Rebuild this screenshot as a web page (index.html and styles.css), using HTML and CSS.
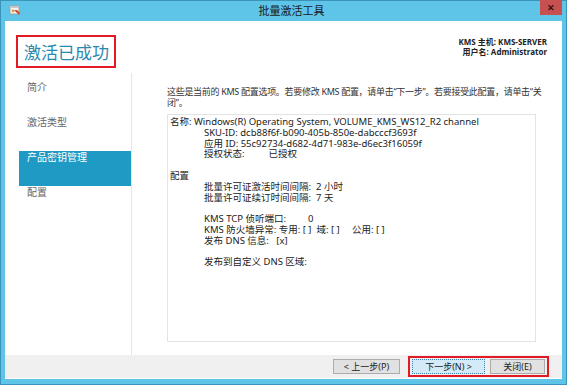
FILE: index.html
```html
<!DOCTYPE html>
<html lang="zh-CN">
<head>
    <meta charset="UTF-8">
    <title>批量激活工具</title>
    <link rel="stylesheet" href="styles.css">
</head>
<body>

<div class="window">
    <div class="titlebar">
        <svg class="app-icon" width="12" height="12" viewBox="0 0 12 12">
            <rect x="1" y="2" width="9" height="8" fill="#f4f4f4" stroke="#9a9a9a" stroke-width="0.8"/>
            <rect x="1" y="2" width="9" height="2" fill="#c8c8c8"/>
            <path d="M5 6 L10 11 L11 9 L8 6 Z" fill="#d04a2a"/>
            <circle cx="4" cy="7" r="1.4" fill="#e0a040"/>
        </svg>
        <div class="title">批量激活工具</div>
        <div class="close">✕</div>
    </div>

    <div class="client">
        <div class="header">
            <h1 class="heading">激活已成功</h1>
            <div class="host-info">
                <div>KMS 主机: KMS-SERVER</div>
                <div>用户名: Administrator</div>
            </div>
        </div>

        <div class="main">
            <ul class="nav">
                <li>简介</li>
                <li>激活类型</li>
                <li class="active">产品密钥管理</li>
                <li>配置</li>
            </ul>

            <div class="content">
                <p class="intro">这些是当前的 KMS 配置选项。若要修改 KMS 配置，请单击“下一步”。若要接受此配置，请单击“关闭”。</p>
                <div class="details">
                    <div>名称: Windows(R) Operating System, VOLUME_KMS_WS12_R2 channel</div>
                    <div class="ind">SKU-ID: dcb88f6f-b090-405b-850e-dabcccf3693f</div>
                    <div class="ind">应用 ID: 55c92734-d682-4d71-983e-d6ec3f16059f</div>
                    <div class="ind">授权状态:<span class="tab1">已授权</span></div>
                    <div class="blank"></div>
                    <div>配置</div>
                    <div class="ind">批量许可证激活时间间隔:&nbsp; 2 小时</div>
                    <div class="ind">批量许可证续订时间间隔:&nbsp; 7 天</div>
                    <div class="blank"></div>
                    <div class="ind">KMS TCP 侦听端口:<span class="tab2">0</span></div>
                    <div class="ind">KMS 防火墙异常: 专用: [ ]&nbsp; 域: [ ]&nbsp;&nbsp;&nbsp;&nbsp; 公用: [ ]</div>
                    <div class="ind">发布 DNS 信息:&nbsp;&nbsp; [x]</div>
                    <div class="blank"></div>
                    <div class="ind">发布到自定义 DNS 区域:</div>
                </div>
            </div>
        </div>

        <div class="footer">
            <button class="btn">&lt; 上一步(P)</button>
            <div class="marked">
                <button class="btn default">下一步(N) &gt;</button>
                <button class="btn">关闭(E)</button>
            </div>
        </div>
    </div>
</div>

</body>
</html>
```

FILE: styles.css
```css
body {
    margin: 0;
    font-family: "Noto Sans", "Noto Sans CJK SC", sans-serif;
    background: #fff;
}
.window {
    width: 567px;
    height: 385px;
    box-sizing: border-box;
    background: #5ec4e8;
    border: 1px solid #3a94b8;
    padding: 0 4px 5px 4px;
    display: flex;
    flex-direction: column;
}
.titlebar {
    height: 20px;
    display: flex;
    align-items: center;
    position: relative;
}
.app-icon {
    margin-left: 4px;
    margin-top: -2px;
}
.title {
    flex: 1;
    text-align: center;
    font-size: 11px;
    color: #1a1a1a;
    font-family: "Noto Sans CJK SC", sans-serif;
    margin-top: -2px;
}
.close {
    position: absolute;
    right: 0;
    top: -1px;
    width: 22px;
    height: 15px;
    background: #c75050;
    color: #3a1010;
    font-size: 9px;
    font-weight: bold;
    display: flex;
    align-items: center;
    justify-content: center;
}
.client {
    flex: 1;
    background: #fff;
    display: flex;
    flex-direction: column;
    border-bottom: 1px solid #fff;
}
.header {
    height: 52px;
    display: flex;
    justify-content: space-between;
    align-items: flex-start;
}
.heading {
    margin: 14px 0 0 11px;
    padding: 4px 5px 3px 6px;
    border: 2px solid #e01b24;
    font-size: 17px;
    font-weight: normal;
    line-height: 22px;
    color: #2a89ae;
    font-family: "Noto Sans CJK SC", sans-serif;
}
.host-info {
    margin: 16px 15px 0 0;
    text-align: right;
    font-size: 8px;
    line-height: 10px;
    font-weight: bold;
    color: #222;
}
.main {
    flex: 1;
    display: flex;
}
.nav {
    list-style: none;
    margin: 0;
    padding: 8px 0 0 14px;
    width: 112px;
    border-right: 1px solid #e6e6e6;
}
.nav li {
    height: 35px;
    padding-left: 8px;
    font-size: 10px;
    line-height: 12px;
    color: #666;
    font-family: "Noto Sans CJK SC", sans-serif;
}
.nav li.active {
    background: #1e9ac4;
    color: #fff;
}
.content {
    flex: 1;
    padding: 13px 26px 13px 35px;
    display: flex;
    flex-direction: column;
}
.intro {
    margin: 0 -8px 6px 0;
    font-size: 9px;
    line-height: 11px;
    letter-spacing: -0.3px;
    color: #333;
}
.details {
    flex: 1;
    border: 1px solid #e3e3e3;
    padding: 2px 2px;
    font-size: 9.5px;
    line-height: 10.8px;
    color: #222;
}
.details .ind {
    padding-left: 34px;
}
.details .blank {
    height: 10.8px;
}
.tab1 {
    padding-left: 24px;
}
.tab2 {
    padding-left: 22px;
}
.footer {
    height: 23px;
    background: #f0f0f0;
    display: flex;
    justify-content: flex-end;
    align-items: center;
    padding-right: 13px;
    gap: 8px;
}
.marked {
    display: flex;
    gap: 5px;
    border: 2px solid #e01b24;
    padding: 1px 2px 1px 2px;
}
.btn {
    height: 15px;
    padding: 0;
    border: 1px solid #acacac;
    background: #e1e1e1;
    font-size: 9px;
    line-height: 13px;
    color: #222;
    font-family: "Noto Sans", "Noto Sans CJK SC", sans-serif;
    width: 67px;
}
.btn.default {
    width: 73px;
    background: #d3ebf9;
    border: 1px dotted #3c7fb1;
}
.marked .btn:last-child {
    width: 55px;
}
```
